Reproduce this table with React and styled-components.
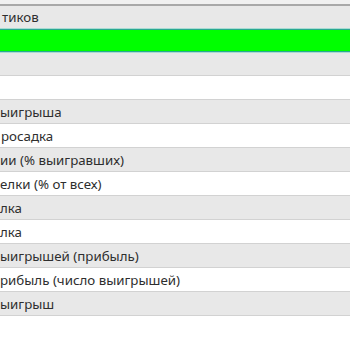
import React from 'react';
import styled, { createGlobalStyle } from 'styled-components';

const GlobalStyle = createGlobalStyle`
  html, body {
    margin: 0;
    padding: 0;
    background: #ffffff;
  }
  body {
    font-family: "Noto Sans", "Open Sans", sans-serif;
  }
`;

const Grid = styled.div`
  width: 350px;
  height: 350px;
  overflow: hidden;
  background: #ffffff;
`;

const HeaderStrip = styled.div`
  height: 4px;
  background: #f0f0f0;
  border-bottom: 2px solid #a8a8a8;
`;

const shades = {
  gray: '#e8e8e8',
  white: '#ffffff',
};

const Row = styled.div`
  box-sizing: border-box;
  height: ${({ h }) => h || 24}px;
  display: flex;
  align-items: center;
  padding-left: ${({ indent }) => indent || 0}px;
  background: ${({ shade }) => shades[shade] || '#ffffff'};
  border-bottom: 1px solid #d2d2d2;
  font-size: 13.3px;
  color: #2e2e2e;
  white-space: nowrap;
`;

const GreenRow = styled.div`
  box-sizing: border-box;
  height: 23px;
  background: #00ff00;
  border-top: 1px solid #2aa892;
  border-bottom: 1px solid #2aa892;
  box-shadow: 0 -1px 0 #a8dcd2, 0 1px 0 #a8dcd2;
  position: relative;
`;

const rows = [
  { text: 'ыигрыша', shade: 'gray', indent: 0 },
  { text: 'росадка', shade: 'white', indent: 1 },
  { text: 'ии (% выигравших)', shade: 'gray', indent: 0 },
  { text: 'елки (% от всех)', shade: 'white', indent: 0 },
  { text: 'лка', shade: 'gray', indent: 0 },
  { text: 'лка', shade: 'white', indent: 0 },
  { text: 'ыигрышей (прибыль)', shade: 'gray', indent: 0 },
  { text: 'рибыль (число выигрышей)', shade: 'white', indent: 0 },
  { text: 'ыигрыш', shade: 'gray', indent: 0 },
];

export default function App() {
  return (
    <>
      <GlobalStyle />
      <Grid>
        <HeaderStrip />
        <Row shade="gray" h={23} indent={2}>тиков</Row>
        <GreenRow />
        <Row shade="gray" />
        <Row shade="white" />
        {rows.map((r, i) => (
          <Row key={i} shade={r.shade} indent={r.indent}>{r.text}</Row>
        ))}
      </Grid>
    </>
  );
}
